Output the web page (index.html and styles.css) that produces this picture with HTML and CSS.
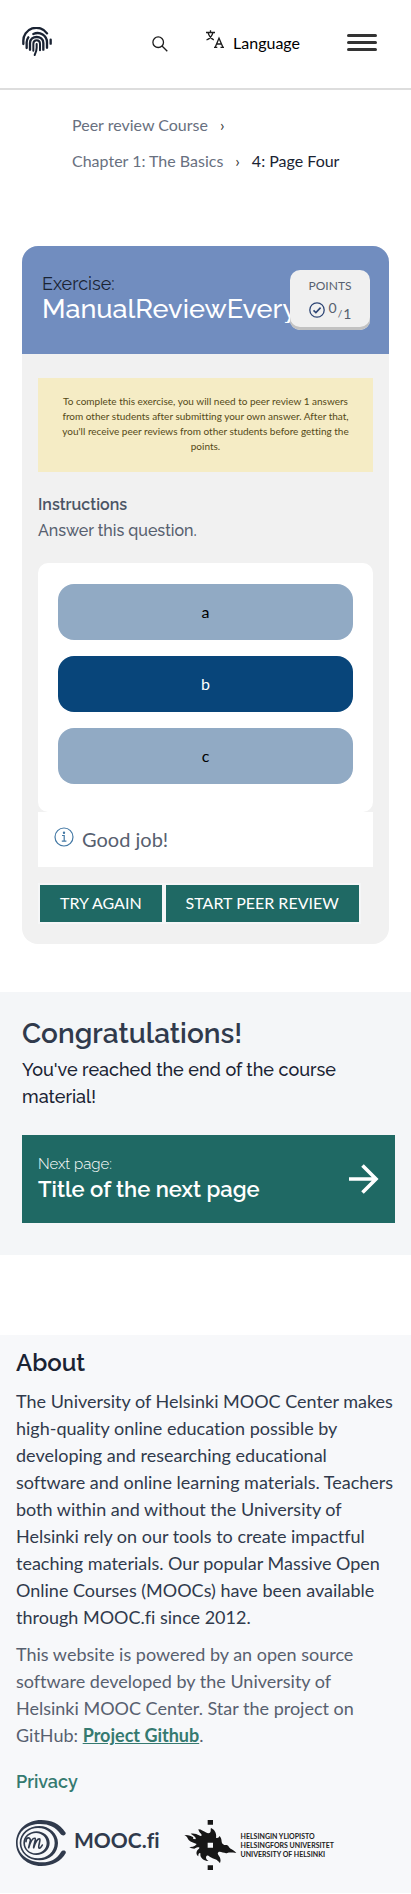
FILE: index.html
```html
<!DOCTYPE html>
<html lang="en">
<head>
<meta charset="utf-8">
<meta name="viewport" content="width=device-width, initial-scale=1">
<title>Page Four</title>
<link rel="stylesheet" href="styles.css">
</head>
<body>
<header class="topbar">
  <a class="home" href="#" aria-label="Home">
    <svg width="30" height="30" viewBox="0 0 90 90" fill="none" stroke="#1a2333" stroke-width="7" stroke-linecap="round">
      <path d="M4 51V43A39 39 0 0 1 75 19M86 38V50M14 63V46C14 40 16 35 19 31M34 21C54 12 75 26 75 46V62M24 68V48C24 24 64 24 64 48V68"/>
      <path stroke-width="6" d="M34 71V50C34 36 54 36 54 50V70M44 51V62C44 71 41 78 38 84"/>
    </svg>
  </a>
  <button class="search" aria-label="Search">
    <svg width="16" height="16" viewBox="0 0 16 16" fill="none" stroke="#1c1c1c" stroke-width="1.3"><circle cx="6.2" cy="6.2" r="5.3"/><path d="M10 10l5.3 5.3"/></svg>
  </button>
  <button class="language">
    <svg width="18" height="18" viewBox="0 0 18 18" fill="none" stroke="#1c1c1c" stroke-width="1.3"><path d="M0 2.5h9M4.5 .3v2.2M2 2.5C3 6 5 8.500 7.800 9.800M7 2.500C6 6 3.500 8.800 .5 10M9.300 17L13 8.200L16.800 17M10.700 14h4.600M8 17.300h3.300M14.500 17.300H18"/></svg>
    <span>Language</span>
  </button>
  <button class="menu" aria-label="Open menu"><span></span><span></span><span></span></button>
</header>

<nav class="crumbs" aria-label="Breadcrumb">
  <ol>
    <li><a href="#">Peer review Course</a><i>›</i></li>
    <li><a href="#">Chapter 1: The Basics</a><i>›</i></li>
    <li class="current">4: Page Four</li>
  </ol>
</nav>

<main>
  <section class="exercise">
    <div class="exercise-head">
      <h2><span class="kind">Exercise:</span><span class="name">ManualReviewEverything</span></h2>
      <div class="points">
        <span class="points-label">POINTS</span>
        <span class="score">
          <svg width="16" height="16" viewBox="0 0 16 16" fill="none" stroke="#2e4675" stroke-width="1.3"><circle cx="8" cy="8" r="7.200"/><path d="M4.500 8.300l2.400 2.300l4.700-5" stroke-width="1.600"/></svg>
          <span class="fraction"><sup>0</sup><small>/</small><sub>1</sub></span>
        </span>
      </div>
    </div>
    <div class="exercise-body">
      <p class="notice">To complete this exercise, you will need to peer review 1 answers from other students after submitting your own answer. After that, you'll receive peer reviews from other students before getting the points.</p>
      <h3>Instructions</h3>
      <p class="task">Answer this question.</p>
      <div class="options">
        <button>a</button>
        <button class="chosen">b</button>
        <button>c</button>
      </div>
      <div class="feedback">
        <svg width="20" height="20" viewBox="0 0 20 20" fill="none" stroke="#4479a5" stroke-width="1.200"><circle cx="10" cy="10" r="9"/><path d="M8 8.500h2.200V14M7.800 14.200h4.600"/><circle cx="10" cy="5.800" r=".6" fill="#4479a5"/></svg>
        <span>Good job!</span>
      </div>
      <div class="actions"><button>TRY AGAIN</button><button>START PEER REVIEW</button></div>
    </div>
  </section>

  <section class="congrats">
    <h2>Congratulations!</h2>
    <p>You've reached the end of the course material!</p>
    <a class="next" href="#">
      <span class="next-text"><span class="next-label">Next page:</span><span class="next-title">Title of the next page</span></span>
      <svg width="30" height="30" viewBox="0 0 30 30" fill="none" stroke="#fff" stroke-width="3.600"><path d="M0 15h27M13.500 1.500L27 15L13.500 28.500"/></svg>
    </a>
  </section>
</main>

<footer class="about">
  <h2>About</h2>
  <p>The University of Helsinki MOOC Center makes high-quality online education possible by developing and researching educational software and online learning materials. Teachers both within and without the University of Helsinki rely on our tools to create impactful teaching materials. Our popular Massive Open Online Courses (MOOCs) have been available through MOOC.fi since 2012.</p>
  <p class="source">This website is powered by an open source software developed by the University of Helsinki MOOC Center. Star the project on GitHub: <a href="#">Project Github</a>.</p>
  <a class="privacy" href="#">Privacy</a>
  <div class="logos">
    <a class="mooc" href="#">
      <svg width="50" height="46" viewBox="0 0 150 138" fill="none" stroke="#303a4c">
        <path fill="#303a4c" stroke="none" d="M149 38C131 10 105 0 75 0C33 0 0 29 0 69C0 108 34 138 76 138C110 138 136 123 149 100C152 91 140 89 135 96C122 118 102 127 79 127C39 127 5 104 5 69C5 34 34 12 72 12C100 12 119 22 133 41C139 50 151 46 149 38Z"/>
        <path fill="#303a4c" stroke="none" fill-rule="evenodd" d="M70 18C100 18 126 41 126 69C126 99 101 121 70 121C37 121 11 98 11 69C11 40 38 18 70 18ZM66 24C39 24 16 43 16 69C16 95 38 115 66 115C94 115 116 95 116 69C116 43 94 24 66 24Z"/>
        <path fill="#303a4c" stroke="none" fill-rule="evenodd" d="M62 34C83 34 101 49 101 69C101 89 83 105 61 105C40 105 22 89 22 69C22 49 40 34 62 34ZM60 39C42 39 27 52 27 69C27 87 42 100 59 100C78 100 92 86 92 69C92 52 77 39 60 39Z"/>
        <path stroke-width="5" stroke-linecap="round" stroke-linejoin="round" d="M30 65C29 51 44 50 43 62L38 83C43 67 50 53 57 55C61 57 53 73 53 83C58 66 66 54 71 57C75 60 65 79 69 84C72 86 76 81 79 75"/>
      </svg>
      <span>MOOC.fi</span>
    </a>
    <a class="helsinki" href="#">
      <svg width="53" height="50" viewBox="0 0 159 150" fill="#171717">
        <path d="M71 0h16v14H71zM71 136h16v14H71z"/>
        <path fill-rule="evenodd" d="M1 45C12 44 22 47 28 52C25 56 28 58 34 58C39 53 29 47 20 41C30 39 39 42 45 46C51 50 56 47 51 41C45 36 44 32 43 28C53 28 57 34 65 37C73 42 79 40 80 34C81 31 79 28 81 24C96 30 98 47 96 53C101 56 105 52 106 48C116 57 110 65 116 72C123 78 129 72 133 78C137 88 148 88 157 99C145 98 137 96 130 99C121 102 108 92 103 97C97 103 109 109 109 117C111 123 108 127 108 130C99 115 89 118 77 110C69 104 67 107 66 113C67 119 70 120 74 123C60 123 50 115 49 105C51 96 44 98 43 105L43 109C34 102 37 91 45 86C49 80 41 81 31 86C26 86 20 84 16 81C29 82 35 77 38 72C28 68 17 66 12 57C10 51 7 48 1 45ZM71 68V83H87V68Z"/>
      </svg>
      <span>HELSINGIN YLIOPISTO<br>HELSINGFORS UNIVERSITET<br>UNIVERSITY OF HELSINKI</span>
    </a>
  </div>
</footer>
</body>
</html>
```

FILE: styles.css
```css
* { box-sizing: border-box; }
body { margin: 0; background: #fff; color: #1a2333; font-family: Lato, sans-serif; font-variant-ligatures: none; }
h2, h3, p, ol { margin: 0; padding: 0; }
button { font: inherit; border: 0; background: none; padding: 0; cursor: pointer; }
a { color: inherit; text-decoration: none; }
svg { display: block; flex: none; }
h2, h3, .task, .congrats, .privacy { font-family: Raleway, Lato, sans-serif; }

.topbar { display: flex; align-items: center; height: 90px; padding: 0 34px 4px 22px; border-bottom: 2px solid #ddd; }
.home { margin-right: auto; }
.search { padding-top: 3px; }
.language { display: flex; align-items: center; gap: 9px; margin: 0 47px 0 38px; font-size: 16px; color: #000; }
.language svg { margin-bottom: 6px; }
.menu { display: flex; flex-direction: column; gap: 4px; width: 30px; }
.menu span { height: 3px; border-radius: 2px; background: #333; }

.crumbs { padding: 17px 48px 67px 72px; font-size: 16px; line-height: 36px; }
.crumbs ol { display: flex; flex-wrap: wrap; list-style: none; }
.crumbs li { color: #687080; }
.crumbs li:first-child { width: 100%; }
.crumbs i { font-style: normal; padding: 0 12px; color: #333; }
.crumbs .current { color: #1a2333; }

.exercise { margin: 0 22px; border-radius: 16px; overflow: hidden; background: #f1f1f1; }
.exercise-head { position: relative; height: 108px; padding: 27px 99px 0 20px; background: #718dbf; }
.exercise-head h2 { font-weight: 400; white-space: nowrap; }
.kind, .name { display: block; }
.kind { font-size: 18px; line-height: 22px; color: #1a2333; }
.name { overflow: hidden; font-size: 27px; line-height: 28px; font-weight: 500; color: #fff; }
.points { position: absolute; top: 24px; right: 19px; width: 80px; height: 60px; padding-top: 8px; display: flex; flex-direction: column; align-items: center; gap: 4px; border-radius: 10px; background: #f0f0f0; box-shadow: inset 0 -3px #c2c2c2; color: #57606f; }
.points-label { font-size: 12px; line-height: 16px; }
.score { display: flex; align-items: center; gap: 4px; }
.fraction { display: flex; align-items: center; line-height: 16px; }
.fraction sup, .fraction sub { font-size: 14px; line-height: 15px; }
.fraction sup { padding-bottom: 4px; }
.fraction sub { padding-top: 8px; }
.fraction small { font-size: 10px; padding: 6px 1px 0; }

.exercise-body { padding: 24px 16px 20px; }
.notice { padding: 16px 20px 18px; background: #f5ecc5; color: #544917; font-size: 10px; line-height: 15px; text-align: center; }
h3 { margin-top: 20px; font-size: 16px; line-height: 26px; font-weight: 600; color: #4b5565; }
.task { font-size: 16px; line-height: 26px; font-weight: 500; color: #57606f; margin-bottom: 19px; }
.options { display: flex; flex-direction: column; gap: 16px; padding: 21px 20px 28px; border-radius: 10px; background: #fff; }
.options button { height: 56px; padding-bottom: 2px; border-radius: 16px; background: #91aac4; font-size: 16px; color: #000; }
.options .chosen { background: #08457a; color: #fff; }
.feedback { display: flex; align-items: center; gap: 8px; height: 55px; padding: 0 16px 2px; background: #fff; color: #57606f; font-size: 20px; }
.feedback svg { margin-bottom: 4px; }
.actions { display: flex; margin-top: 16px; }
.actions button { height: 41px; padding: 0 20px 2px; border: 2px solid #f5f6f7; background: #1f6964; color: #fff; font-size: 16px; white-space: nowrap; }

.congrats { margin-top: 48px; padding: 24px 16px 32px 22px; background: #f4f6f8; }
.congrats h2 { font-size: 28px; line-height: 36px; font-weight: 600; color: #303a4c; }
.congrats p { padding-top: 4px; font-size: 18px; line-height: 27px; font-weight: 500; }
.next { display: flex; align-items: center; justify-content: space-between; height: 88px; margin-top: 25px; padding: 0 16px; background: #1f6964; color: #fff; }
.next-text { display: flex; flex-direction: column; padding-bottom: 2px; }
.next-label { font-size: 15px; line-height: 22px; font-weight: 300; }
.next-title { font-size: 22px; line-height: 28px; font-weight: 600; }

.about { margin-top: 80px; padding: 12px 16px 23px; background: #f7f8fa; }
.about h2 { font-size: 24px; line-height: 32px; font-weight: 600; }
.about p { margin-top: 10px; font-size: 18px; line-height: 27px; color: #303a4c; }
.about h2 + p { margin-top: 9px; }
.about .source { color: #57606f; }
.source a { color: #357a70; font-weight: 700; text-decoration: underline; }
.privacy { display: block; margin-top: 19px; font-size: 18px; line-height: 27px; font-weight: 600; color: #357a70; }
.logos { display: flex; gap: 24px; margin-top: 25px; align-items: flex-start; }
.mooc { display: flex; gap: 8px; font-size: 21px; line-height: 40px; font-weight: 700; color: #303a4c; }
.helsinki { display: flex; align-items: center; gap: 4px; font-size: 7px; line-height: 9px; font-weight: 700; color: #222; white-space: nowrap; }
```
